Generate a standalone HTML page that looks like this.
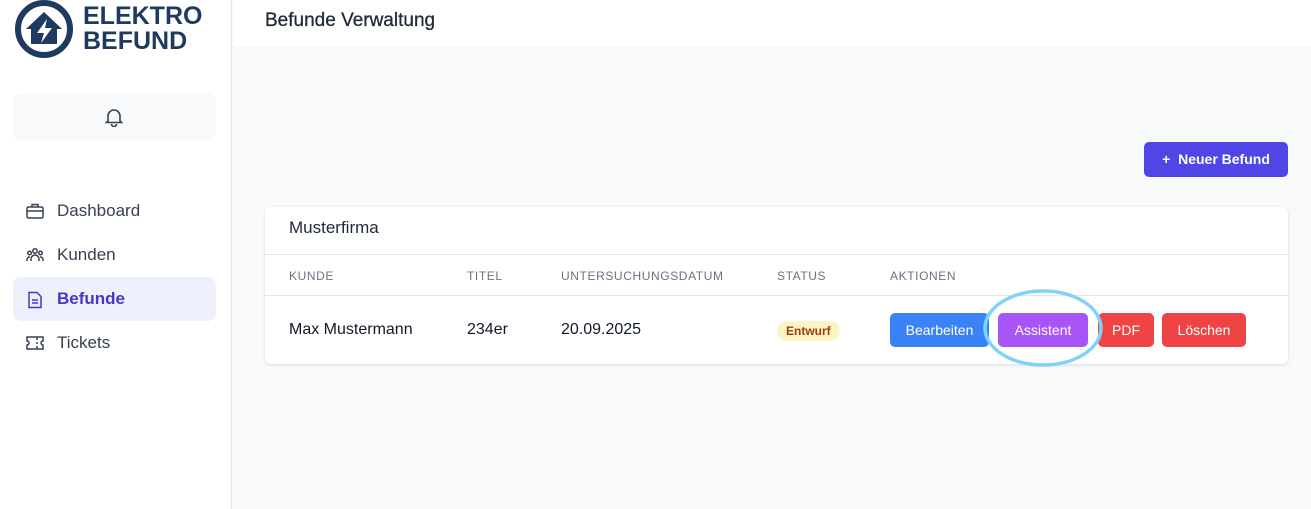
<!DOCTYPE html>
<html><head><meta charset="utf-8"><style>
*{box-sizing:border-box;margin:0;padding:0}
body{width:1311px;height:509px;overflow:hidden;font-family:"Liberation Sans",sans-serif;background:#f8f9fb;position:relative;color:#1f2937}
.side{position:absolute;left:0;top:0;width:232px;height:509px;background:#fff;border-right:1px solid #e5e7eb}
.hdr{position:absolute;left:233px;top:0;right:0;height:46px;background:#fff}
.hdr span{position:absolute;left:32px;top:10px;font-size:19px;color:#1f2937;-webkit-text-stroke:0.3px #1f2937}
.logo{position:absolute;left:14px;top:0}
.lt{position:absolute;left:83px;top:4px;font-size:25px;font-weight:bold;color:#1e3a5f;line-height:25px}
.bell{position:absolute;left:13px;top:93px;width:203px;height:47px;background:#f8f9fb;border-radius:8px}
.nav{position:absolute;left:13px;width:203px;height:44px;border-radius:8px;font-size:17px;color:#374151}
.nav span{position:absolute;left:44px;top:12px}
.nav svg{position:absolute;left:13px;top:14px}
.act{background:#eef1fb;color:#4338ca;font-weight:bold}
.btn{position:absolute;color:#fff;font-size:14px;border-radius:5px;text-align:center}
.card{position:absolute;left:265px;top:207px;width:1023px;height:157px;background:#fff;border-radius:6px;box-shadow:0 1px 3px rgba(0,0,0,.12)}
.th{position:absolute;top:62px;font-size:12px;color:#6b7280;letter-spacing:.6px}
.td{position:absolute;top:114px;font-size:16px;color:#111827}
</style></head><body>
<div class="side">
<svg class="logo" width="62" height="62" viewBox="0 0 62 62"><circle cx="30" cy="29" r="26" fill="none" stroke="#1e3a5f" stroke-width="6"/><path d="M12 29 L30 12 L48 29 L43 29 L43 44 L17 44 L17 29Z" fill="#1e3a5f"/><path d="M33 19 L23 33 L30 33 L27 43 L38 28 L31 28Z" fill="#fff"/></svg>
<div class="lt">ELEKTRO<br>BEFUND</div>
<div class="bell"><svg style="position:absolute;left:92px;top:14px" width="18" height="20" viewBox="0 0 18 20" fill="none" stroke="#374151" stroke-width="1.6"><path d="M3 14 V9 a6 6 0 0 1 12 0 V14 L16.5 15.5 H1.5Z"/><path d="M6.5 17 a2.5 2.5 0 0 0 5 0"/></svg></div>
<div class="nav" style="top:189px"><svg width="18" height="16" viewBox="0 0 18 16" fill="none" stroke="#374151" stroke-width="1.5"><rect x="1" y="4" width="16" height="11" rx="1.5"/><path d="M6 4V1.5h6V4M1 8h16"/></svg><span>Dashboard</span></div>
<div class="nav" style="top:233px"><svg width="18" height="16" viewBox="0 0 18 16" fill="none" stroke="#374151" stroke-width="1.5"><circle cx="9" cy="4" r="2.2"/><circle cx="3.5" cy="6" r="1.8"/><circle cx="14.5" cy="6" r="1.8"/><path d="M5 14v-2a4 4 0 0 1 8 0v2M1 14v-1.5a2.5 2.5 0 0 1 3-2.4M17 14v-1.5a2.5 2.5 0 0 0-3-2.4"/></svg><span>Kunden</span></div>
<div class="nav act" style="top:277px"><svg width="18" height="18" viewBox="0 0 18 18" fill="none" stroke="#4338ca" stroke-width="1.5"><path d="M3 1.5h8l4 4v11H3z M6 9h6M6 12h6"/></svg><span>Befunde</span></div>
<div class="nav" style="top:321px"><svg width="18" height="16" viewBox="0 0 18 16" fill="none" stroke="#374151" stroke-width="1.5"><path d="M1 2h16v4a2 2 0 0 0 0 4v4H1v-4a2 2 0 0 0 0-4z M11 2v3M11 7v2M11 11v3"/></svg><span>Tickets</span></div>
</div>
<div class="hdr"><span>Befunde Verwaltung</span></div>
<div class="btn" style="left:1144px;top:142px;width:144px;height:35px;background:#4f46e5;font-weight:bold;line-height:35px">+&nbsp;&nbsp;Neuer Befund</div>
<div class="card">
<div style="position:absolute;left:24px;top:11px;font-size:17px">Musterfirma</div>
<div style="position:absolute;left:0;right:0;top:47px;border-top:1px solid #e5e7eb"></div>
<div style="position:absolute;left:0;right:0;top:88px;border-top:1px solid #e5e7eb"></div>
<div class="th" style="left:24px">KUNDE</div>
<div class="th" style="left:202px">TITEL</div>
<div class="th" style="left:296px">UNTERSUCHUNGSDATUM</div>
<div class="th" style="left:512px">STATUS</div>
<div class="th" style="left:625px">AKTIONEN</div>
<div class="td" style="left:24px">Max Mustermann</div>
<div class="td" style="left:202px">234er</div>
<div class="td" style="left:296px">20.09.2025</div>
<div style="position:absolute;left:512px;top:114px;height:20px;padding:0 9px;background:#fef3c7;color:#92400e;font-size:12px;font-weight:bold;border-radius:10px;line-height:20px">Entwurf</div>
</div>
<div class="btn" style="left:890px;top:313px;width:99px;height:34px;line-height:34px;background:#3b82f6">Bearbeiten</div>
<div class="btn" style="left:998px;top:313px;width:90px;height:34px;line-height:34px;background:#a855f7">Assistent</div>
<div class="btn" style="left:1098px;top:313px;width:56px;height:34px;line-height:34px;background:#ef4444">PDF</div>
<div class="btn" style="left:1162px;top:313px;width:84px;height:34px;line-height:34px;background:#ef4444">Löschen</div>
<svg style="position:absolute;left:980px;top:288px" width="126" height="82"><ellipse cx="63" cy="40" rx="58" ry="37" fill="none" stroke="#7dd3fc" stroke-width="3.5"/></svg>
</body></html>
